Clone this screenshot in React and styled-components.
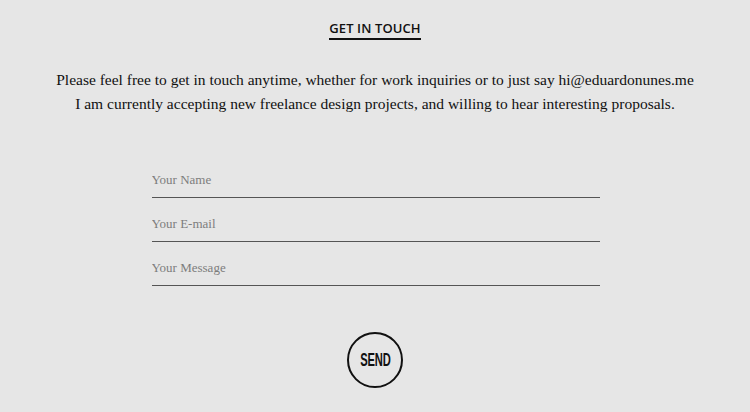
import React from "react";
import styled, { createGlobalStyle } from "styled-components";

const Global = createGlobalStyle`
  html, body { margin: 0; padding: 0; background: #e6e6e6; }
  body { width: 750px; height: 412px; overflow: hidden; }
`;

const Page = styled.div`
  display: flex;
  flex-direction: column;
  align-items: center;
  padding-top: 20px;
  background: #e6e6e6;
  height: 412px;
  box-sizing: border-box;
`;

const Title = styled.h2`
  margin: 0;
  font-family: "Open Sans", sans-serif;
  font-weight: 600;
  font-size: 13px;
  line-height: 17px;
  color: #111;
  letter-spacing: 0.1px;
  padding-bottom: 1px;
  border-bottom: 2px solid #111;
`;

const Intro = styled.p`
  margin: 28px 0 0;
  font-family: "Liberation Serif", serif;
  font-size: 15.5px;
  line-height: 24px;
  color: #111;
  text-align: center;
`;

const Form = styled.form`
  margin: 38px 0 0 1px;
  width: 448px;
  display: flex;
  flex-direction: column;
`;

const Field = styled.input`
  height: 44px;
  box-sizing: border-box;
  border: none;
  border-bottom: 1.5px solid #555;
  background: transparent;
  padding: 8px 0 0;
  font-family: "Liberation Serif", serif;
  font-size: 13px;
  color: #333;
  outline: none;
  &::placeholder { color: #7d7d7d; }
`;

const Send = styled.button`
  margin-top: 46px;
  width: 56px;
  height: 56px;
  border-radius: 50%;
  border: 2px solid #111;
  background: transparent;
  font-family: "Liberation Sans Narrow", "Liberation Sans", sans-serif;
  font-weight: 700;
  font-size: 18px;
  color: #111;
  padding: 0;
  display: flex;
  align-items: center;
  justify-content: center;
  cursor: pointer;
`;

const SendText = styled.span`
  display: inline-block;
  transform: scaleX(0.62);
  letter-spacing: -0.3px;
`;

export default function App() {
  return (
    <>
      <Global />
      <Page>
        <Title>GET IN TOUCH</Title>
        <Intro>
          Please feel free to get in touch anytime, whether for work inquiries or to just say hi@eduardonunes.me
          <br />
          I am currently accepting new freelance design projects, and willing to hear interesting proposals.
        </Intro>
        <Form onSubmit={(e) => e.preventDefault()}>
          <Field placeholder="Your Name" />
          <Field placeholder="Your E-mail" />
          <Field placeholder="Your Message" />
        </Form>
        <Send type="button"><SendText>SEND</SendText></Send>
      </Page>
    </>
  );
}
